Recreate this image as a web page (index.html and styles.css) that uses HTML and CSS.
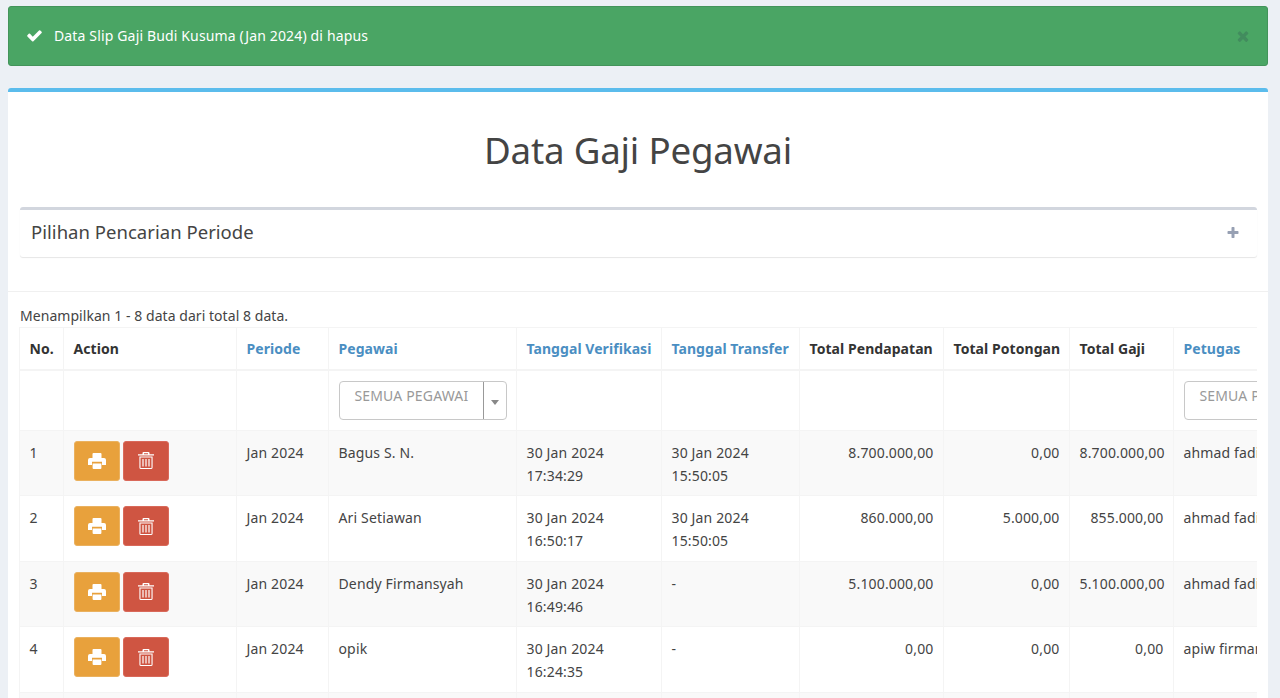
FILE: index.html
```html
<!DOCTYPE html>
<html lang="id">
<head>
<meta charset="utf-8">
<title>Data Gaji Pegawai</title>
<link rel="stylesheet" href="styles.css">
</head>
<body>
<svg class="defs" width="0" height="0" aria-hidden="true">
  <symbol id="i-check" viewBox="0 0 1792 1792"><path d="M1671 566q0 40-28 68l-724 724-136 136q-28 28-68 28t-68-28l-136-136-362-362q-28-28-28-68t28-68l136-136q28-28 68-28t68 28l294 295 656-657q28-28 68-28t68 28l136 136q28 28 28 68z"/></symbol>
  <symbol id="i-times" viewBox="0 0 1792 1792"><path d="M1490 1322q0 40-28 68l-136 136q-28 28-68 28t-68-28l-294-294-294 294q-28 28-68 28t-68-28l-136-136q-28-28-28-68t28-68l294-294-294-294q-28-28-28-68t28-68l136-136q28-28 68-28t68 28l294 294 294-294q28-28 68-28t68 28l136 136q28 28 28 68t-28 68l-294 294 294 294q28 28 28 68z"/></symbol>
  <symbol id="i-plus" viewBox="0 0 1792 1792"><path d="M1600 736v192q0 40-28 68t-68 28h-416v416q0 40-28 68t-68 28h-192q-40 0-68-28t-28-68v-416h-416q-40 0-68-28t-28-68v-192q0-40 28-68t68-28h416v-416q0-40 28-68t68-28h192q40 0 68 28t28 68v416h416q40 0 68 28t28 68z"/></symbol>
  <symbol id="i-print" viewBox="0 0 18 16"><path fill-rule="evenodd" d="M5.5 0H12.5Q13.5 0 13.5 1V5H16Q18 5 18 7V12H14V8.7H4V12H0V7Q0 5 2 5H4.5V1Q4.5 0 5.5 0ZM4.6 10.4H13.4V15Q13.4 16 12.4 16H5.6Q4.6 16 4.6 15Z"/></symbol>
  <symbol id="i-trash" viewBox="0 0 16 17"><path fill-rule="evenodd" d="M5.5 0H10.5Q11.5 0 11.5 1V2.2H16V3.6H0V2.2H4.5V1Q4.5 0 5.5 0ZM6 1.2V2.2H10V1.2ZM1.4 4.6H14.6V15.5Q14.6 17 13 17H3Q1.4 17 1.4 15.5ZM2.5 5.6V15.9H13.5V5.6ZM4.4 7H5.6V14.6H4.4ZM7.4 7H8.6V14.6H7.4ZM10.4 7H11.6V14.6H10.4Z"/></symbol>
</svg>

<div class="alert">
  <svg class="alert-check"><use href="#i-check"/></svg>
  <span class="alert-text">Data Slip Gaji Budi Kusuma (Jan 2024) di hapus</span>
  <svg class="alert-close"><use href="#i-times"/></svg>
</div>

<main class="box">
  <h1 class="title">Data Gaji Pegawai</h1>

  <section class="subbox">
    <h2 class="subbox-title">Pilihan Pencarian Periode</h2>
    <svg class="subbox-plus"><use href="#i-plus"/></svg>
  </section>

  <div class="body">
    <p class="summary">Menampilkan 1 - 8 data dari total 8 data.</p>
    <div class="table-wrap">
      <table class="grid">
        <colgroup>
          <col class="c-no"><col class="c-action"><col class="c-periode"><col class="c-pegawai"><col class="c-verif"><col class="c-transfer"><col class="c-pend"><col class="c-pot"><col class="c-gaji"><col class="c-petugas">
        </colgroup>
        <thead>
          <tr class="head">
            <th>No.</th><th>Action</th><th class="link">Periode</th><th class="link">Pegawai</th><th class="link">Tanggal Verifikasi</th><th class="link">Tanggal Transfer</th><th>Total Pendapatan</th><th>Total Potongan</th><th>Total Gaji</th><th class="link">Petugas</th>
          </tr>
          <tr class="filter">
            <td></td><td></td><td></td>
            <td><div class="select"><span class="select-label">SEMUA PEGAWAI</span><span class="select-arrow"><i class="caret"></i></span></div></td>
            <td></td><td></td><td></td><td></td><td></td>
            <td><div class="select select-wide"><span class="select-label">SEMUA PETUGAS</span><span class="select-arrow"><i class="caret"></i></span></div></td>
          </tr>
        </thead>
        <tbody>
          <tr>
            <td>1</td>
            <td class="actions"><button class="btn btn-print"><svg class="icon-print"><use href="#i-print"/></svg></button><button class="btn btn-trash"><svg class="icon-trash"><use href="#i-trash"/></svg></button></td>
            <td>Jan 2024</td><td>Bagus S. N.</td><td>30 Jan 2024<br>17:34:29</td><td>30 Jan 2024<br>15:50:05</td><td class="num">8.700.000,00</td><td class="num">0,00</td><td class="num">8.700.000,00</td><td>ahmad fadilah</td>
          </tr>
          <tr>
            <td>2</td>
            <td class="actions"><button class="btn btn-print"><svg class="icon-print"><use href="#i-print"/></svg></button><button class="btn btn-trash"><svg class="icon-trash"><use href="#i-trash"/></svg></button></td>
            <td>Jan 2024</td><td>Ari Setiawan</td><td>30 Jan 2024<br>16:50:17</td><td>30 Jan 2024<br>15:50:05</td><td class="num">860.000,00</td><td class="num">5.000,00</td><td class="num">855.000,00</td><td>ahmad fadilah</td>
          </tr>
          <tr>
            <td>3</td>
            <td class="actions"><button class="btn btn-print"><svg class="icon-print"><use href="#i-print"/></svg></button><button class="btn btn-trash"><svg class="icon-trash"><use href="#i-trash"/></svg></button></td>
            <td>Jan 2024</td><td>Dendy Firmansyah</td><td>30 Jan 2024<br>16:49:46</td><td>-</td><td class="num">5.100.000,00</td><td class="num">0,00</td><td class="num">5.100.000,00</td><td>ahmad fadilah</td>
          </tr>
          <tr>
            <td>4</td>
            <td class="actions"><button class="btn btn-print"><svg class="icon-print"><use href="#i-print"/></svg></button><button class="btn btn-trash"><svg class="icon-trash"><use href="#i-trash"/></svg></button></td>
            <td>Jan 2024</td><td>opik</td><td>30 Jan 2024<br>16:24:35</td><td>-</td><td class="num">0,00</td><td class="num">0,00</td><td class="num">0,00</td><td>apiw firmansyah</td>
          </tr>
          <tr class="empty"><td></td><td></td><td></td><td></td><td></td><td></td><td></td><td></td><td></td><td></td></tr>
        </tbody>
      </table>
    </div>
  </div>
</main>
</body>
</html>
```

FILE: styles.css
```css
* { box-sizing: border-box; }
html { height: 100%; overflow: hidden; }
body {
  margin: 0;
  padding: 6px 12px 0 8px;
  height: 100%;
  overflow: hidden;
  background: #ecf0f5;
  font-family: "Noto Sans", "Open Sans", sans-serif;
  font-size: 14px;
  line-height: 23px;
  color: #444;
}
.defs { display: block; height: 0; }

.alert {
  display: flex;
  align-items: center;
  height: 60px;
  padding: 0 18px 0 17px;
  margin-bottom: 22px;
  background: #4aa564;
  border: 1px solid #43945a;
  border-radius: 3px;
  color: #fff;
}
.alert-check { width: 17px; height: 17px; fill: #fff; margin: -1px 11px 0 0; }
.alert-text { flex: 1; margin-top: -1px; letter-spacing: 0.15px; }
.alert-close { width: 16px; height: 16px; fill: #428c5e; margin-right: -2px; }

.box {
  background: #fff;
  border-top: 4px solid #5bbcec;
  border-radius: 3px 3px 0 0;
  height: 620px;
}
.title {
  margin: 0;
  height: 115px;
  padding-top: 34px;
  text-align: center;
  font-size: 36.7px;
  line-height: 48px;
  font-weight: 400;
  color: #444;
  letter-spacing: -0.2px;
}
.subbox {
  display: flex;
  align-items: center;
  justify-content: space-between;
  height: 50px;
  margin: 0 11px 0 12px;
  padding: 0 17px 2px 11px;
  border-top: 3px solid #d2d6de;
  border-radius: 3px;
  box-shadow: 0 1px 1px rgba(0, 0, 0, .1);
}
.subbox-title {
  margin: 0 0 2px;
  font-size: 18.5px;
  line-height: 24px;
  font-weight: 400;
  color: #444;
  letter-spacing: 0.03px;
}
.subbox-plus { width: 14px; height: 14px; fill: #97a0b3; }

.body {
  margin-top: 34px;
  padding: 12px 11px 0 11px;
  border-top: 1px solid #f0f0f0;
}
.summary { margin: 0; height: 23px; padding-left: 1px; letter-spacing: 0.05px; }
.table-wrap { overflow: hidden; }

.grid {
  table-layout: fixed;
  border-collapse: collapse;
  width: 1334px;
}
.c-no { width: 44px; }
.c-action { width: 173px; }
.c-periode { width: 92px; }
.c-pegawai { width: 188px; }
.c-verif { width: 145px; }
.c-transfer { width: 138px; }
.c-pend { width: 144px; }
.c-pot { width: 126px; }
.c-gaji { width: 104px; }
.c-petugas { width: 180px; }

.grid th, .grid td {
  border: 1px solid #f4f4f4;
  padding: 10px 9.5px 8.67px;
  text-align: left;
  vertical-align: top;
  white-space: nowrap;
  overflow: hidden;
  letter-spacing: 0.15px;
}
.grid th { padding: 9px 9.5px; font-weight: 700; color: #333; letter-spacing: 0.06px; }
.grid th.link { color: #4a8ec2; }
.head th { height: 42px; }
.grid .head th { border-bottom-width: 2px; }
.filter td { height: 60px; }
tbody tr:nth-child(odd) { background: #f9f9f9; }
.grid td.num { text-align: right; }

.select {
  display: flex;
  width: 168px;
  height: 39px;
  border: 1px solid #c8c8c8;
  border-radius: 4px;
  background: #fff;
  color: #999;
}
.select-wide { width: 200px; }
.select-label { flex: 1; padding: 2px 0 0 15px; }
.select-arrow {
  display: flex;
  align-items: center;
  justify-content: center;
  width: 23px;
  border-left: 1px solid #999;
}
.caret {
  display: block;
  margin-top: 4px;
  border-top: 5px solid #888;
  border-left: 4.5px solid transparent;
  border-right: 4.5px solid transparent;
}

.btn {
  display: inline-flex;
  align-items: center;
  justify-content: center;
  width: 46px;
  height: 40px;
  padding: 0;
  margin-right: 3px;
  border-radius: 3px;
  vertical-align: top;
}
.btn-print { background: #e8a13c; border: 1px solid #eab15f; }
.btn-trash { background: #cf5542; border: 1px solid #d9695a; }
.icon-print { width: 18px; height: 16px; fill: #fff; }
.icon-trash { width: 16px; height: 17px; margin-left: 1px; fill: #fff; }
```
